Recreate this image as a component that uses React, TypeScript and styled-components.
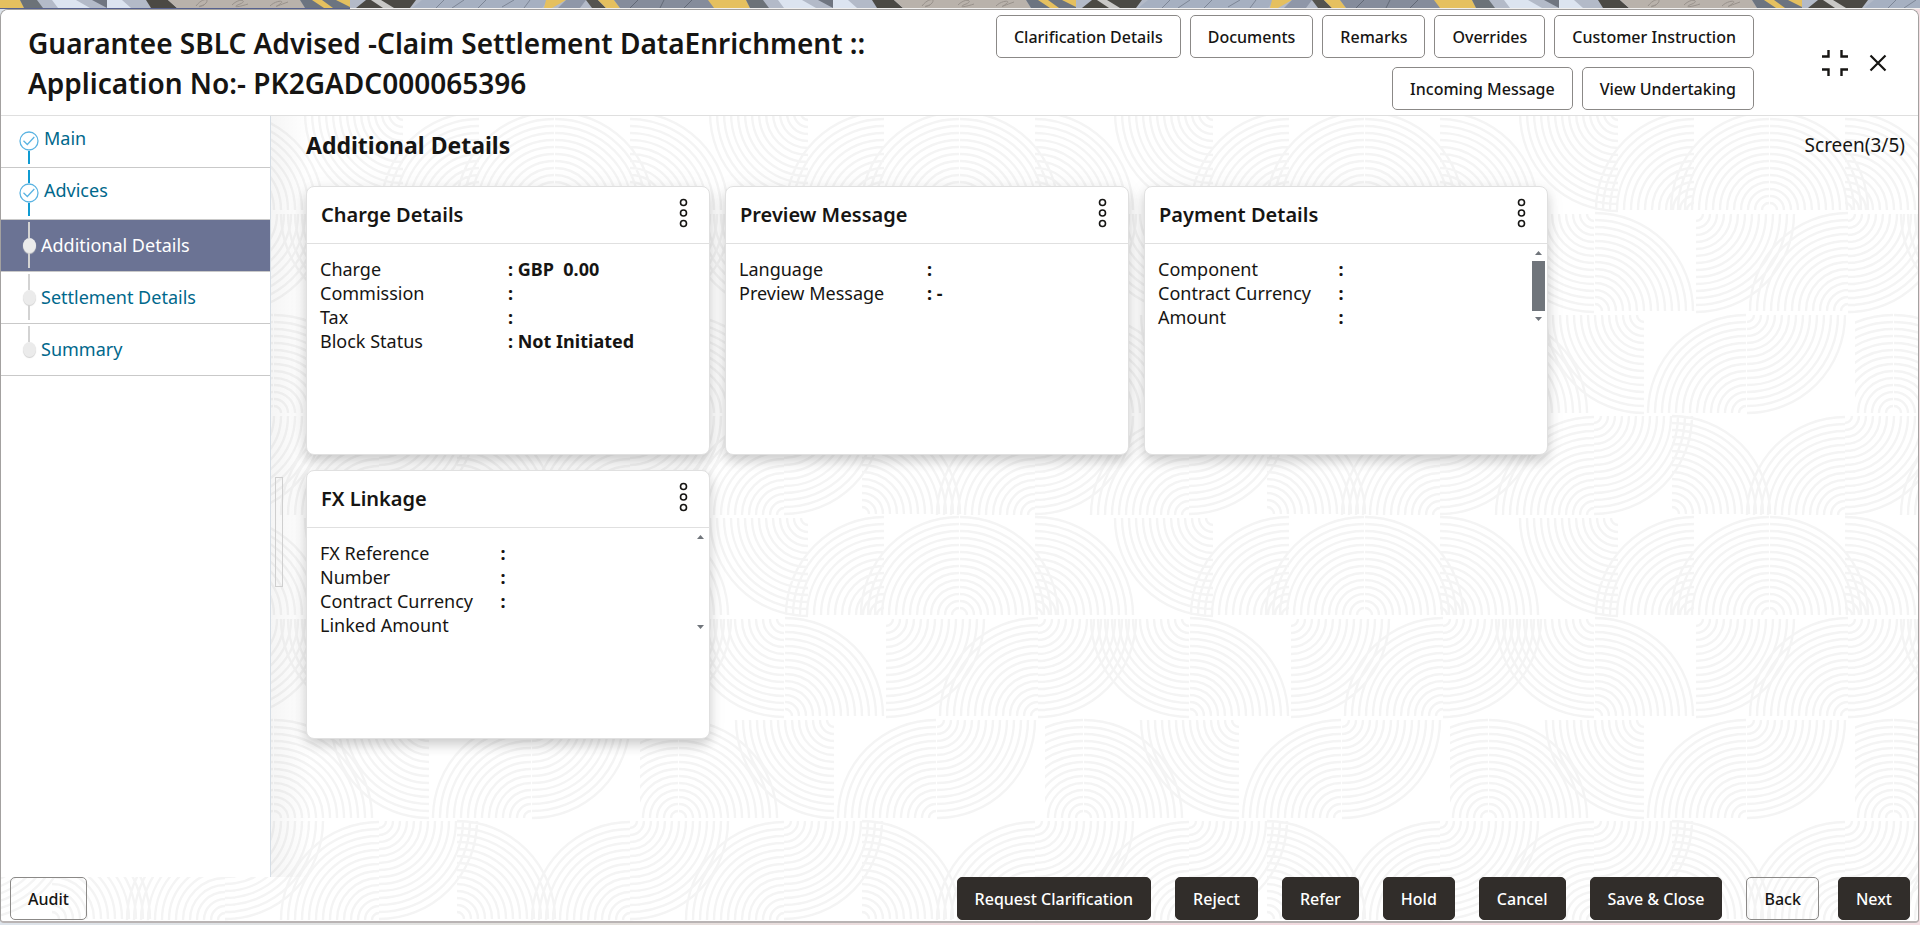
import React from "react";
import styled, { createGlobalStyle, css } from "styled-components";

/* ---------- background texture ---------- */

type Quadrant = "UL" | "UR" | "DL" | "DR";
type Fan = [cx: number, cy: number, quadrant: Quadrant];

const TILE = 405;

const FANS: Fan[] = [
  [144, 105, "UL"], [144, 6, "DR"], [222, 104, "UR"], [395, 105, "UL"], [395, 6, "DR"],
  [395, 205, "UR"], [168, 108, "DL"], [244, 205, "UL"], [319, 205, "UL"], [320, 205, "UR"],
  [398, 209, "DR"], [144, 209, "DL"], [145, 306, "UR"], [246, 209, "DR"], [398, 306, "UL"],
  [38, 408, "UL"], [39, 408, "UR"], [194, 310, "DL"], [296, 408, "UL"], [297, 310, "DR"],
];

const fanPath = ([cx, cy, q]: Fan) => {
  const sx = q === "UL" || q === "DL" ? -1 : 1;
  const sy = q === "UL" || q === "UR" ? -1 : 1;
  const sweep = sx * sy > 0 ? 1 : 0;
  let d = "";
  for (let r = 7; r <= 98; r += 7) {
    d += `M${cx + sx * r} ${cy}A${r} ${r} 0 0 ${sweep} ${cx} ${cy + sy * r}`;
  }
  return d;
};

const texture = () => {
  const d = FANS.map(fanPath).join("");
  const copies = [-TILE, 0]
    .flatMap((x) => [-TILE, 0].map((y) => `<use href='#f' x='${x}' y='${y}'/>`))
    .join("");
  const svg =
    `<svg xmlns='http://www.w3.org/2000/svg' width='${TILE}' height='${TILE}'>` +
    `<defs><path id='f' d='${d}' fill='none' stroke='#f4f4f4' stroke-width='2.4'/></defs>${copies}</svg>`;
  return `url("data:image/svg+xml,${encodeURIComponent(svg)}")`;
};

const TEXTURE = texture();

/* ---------- styles ---------- */

const GlobalStyle = createGlobalStyle`
  *, *::before, *::after { box-sizing: border-box; }
  body {
    margin: 0;
    background: #fff;
    color: #161513;
    font-family: "Noto Sans", "Open Sans", sans-serif;
    font-size: 18px;
    line-height: 24px;
  }
  button { font-family: inherit; cursor: pointer; }
`;

const Page = styled.div`
  display: flex;
  flex-direction: column;
  min-height: 100vh;
  background: linear-gradient(90deg, #dde3ea 0%, #e3e1dc 30%, #f1d9de 55%, #f3dfe3 100%);
`;

const Banner = styled.svg`
  display: block;
  width: 100%;
  height: 9px;
  flex: none;
`;

const Frame = styled.div`
  display: flex;
  flex-direction: column;
  flex: 1;
  margin: 0 1px 2px 0;
  border: 1px solid #a3a1a0;
  border-bottom: 2px solid #b9b4b4;
  border-radius: 8px 8px 4px 4px;
  background: #fff ${TEXTURE} 234px -5px;
  overflow: hidden;
`;

const Header = styled.header`
  display: flex;
  align-items: center;
  min-height: 106px;
  padding: 0 31px 0 27px;
  background: #fff;
  border-bottom: 1px solid #dfdfdf;
`;

const Title = styled.h1`
  flex: 1;
  margin: 0;
  max-width: 880px;
  font-size: 28px;
  line-height: 40px;
  font-weight: 600;
`;

const HeaderActions = styled.div`
  display: flex;
  flex: 0 1 780px;
  flex-wrap: wrap;
  justify-content: flex-end;
  gap: 9px;
  margin-left: auto;
`;

const WindowControls = styled.div`
  display: flex;
  align-items: center;
  gap: 20px;
  margin-left: 67px;
`;

const IconButton = styled.button`
  display: flex;
  padding: 0;
  border: 0;
  background: none;
  color: #161513;
`;

const Button = styled.button<{ $solid?: boolean }>`
  height: 43px;
  padding: 0 17px;
  border: 1px solid #8b8987;
  border-radius: 5px;
  background: transparent;
  color: #161513;
  font-size: 16px;
  line-height: 20px;
  font-weight: 500;
  white-space: nowrap;
  ${(p) =>
    p.$solid &&
    css`
      border-color: #312d2a;
      background: #312d2a;
      color: #fff;
    `}
`;

const Body = styled.div`
  display: flex;
  flex: 1;
`;

const Sidebar = styled.nav`
  flex: 0 0 270px;
  background: #fff;
  border-right: 1px solid #d5dde5;
`;

const StepList = styled.ol`
  margin: 0;
  padding: 0;
  list-style: none;
`;

const Step = styled.li<{ $active?: boolean }>`
  display: flex;
  height: 52px;
  padding-left: 18px;
  border-bottom: 1px solid #c9c9c9;
  background: ${(p) => (p.$active ? "#6b7394" : "#fff")};
`;

const Marker = styled.span`
  display: flex;
  flex-direction: column;
  align-items: center;
  width: 20px;
  padding: 2px 0 3px;
`;

const Rail = styled.span<{ $tone: "blue" | "grey" | "none" }>`
  flex: 1;
  width: 2px;
  background: ${(p) => ({ blue: "#0f9bd2", grey: "#d3d3d3", none: "transparent" })[p.$tone]};
`;

const Dot = styled.span`
  width: 13px;
  height: 15px;
  border-radius: 50%;
  background: #ebebeb;
  box-shadow: 0 1px 1px #d0d0d0;
`;

const StepLink = styled.a<{ $visited?: boolean; $active?: boolean }>`
  align-self: center;
  padding: ${(p) => (p.$visited ? "0 0 8px 5px" : "0 0 2px 2px")};
  color: ${(p) => (p.$active ? "#fff" : "#00688c")};
  text-decoration: none;
`;

const Splitter = styled.div`
  align-self: center;
  flex: none;
  width: 8px;
  height: 110px;
  margin-left: 4px;
  margin-top: 70px;
  border: 1px solid #cfcfcf;
`;

const Content = styled.main`
  display: flex;
  flex: 1;
  background: linear-gradient(90deg, rgba(0, 0, 0, 0.04), transparent 40px);
`;

const Panel = styled.div`
  flex: 1;
  padding: 13px 13px 0 23px;
`;

const PanelHead = styled.div`
  display: flex;
  align-items: center;
  justify-content: space-between;
  height: 32px;
`;

const PanelTitle = styled.h2`
  margin: 0;
  font-size: 23px;
  line-height: 32px;
  font-weight: 700;
`;

const ScreenCount = styled.span`
  font-size: 19px;
`;

const Cards = styled.div`
  display: grid;
  grid-template-columns: repeat(auto-fill, 404px);
  gap: 15px;
  max-width: 1600px;
  padding: 25px 60px 0 0;
`;

const Card = styled.section`
  height: 269px;
  border: 1px solid #e0e0e0;
  border-radius: 8px;
  background: #fff;
  box-shadow: 0 6px 12px rgba(0, 0, 0, 0.18), 0 0 24px rgba(0, 0, 0, 0.04);
`;

const CardHead = styled.div`
  display: flex;
  align-items: flex-start;
  justify-content: space-between;
  height: 57px;
  padding: 11px 21px 0 14px;
  border-bottom: 1px solid #e0e0e0;
`;

const CardTitle = styled.h3`
  margin: 0;
  font-size: 20px;
  line-height: 34px;
  font-weight: 600;
`;

const CardBody = styled.div`
  display: flex;
`;

const Fields = styled.dl`
  flex: 1;
  margin: 0;
  padding: 13px 13px 0;
`;

const Field = styled.div`
  display: grid;
  grid-template-columns: 1fr 1fr;
`;

const Label = styled.dt`
  white-space: nowrap;
`;

const Value = styled.dd`
  margin: 0;
  font-weight: 700;
  white-space: pre;
`;

const ScrollTrack = styled.div<{ $height: number }>`
  display: flex;
  flex-direction: column;
  justify-content: space-between;
  align-items: center;
  width: 13px;
  height: ${(p) => p.$height}px;
  margin: 6px 2px 0 0;
`;

const ScrollThumb = styled.div`
  flex: 0 0 50px;
  width: 13px;
  background: #70757b;
`;

const Footer = styled.footer`
  display: flex;
  justify-content: space-between;
  padding: 0 8px 1px 9px;
`;

const FooterGroup = styled.div`
  display: flex;
  gap: 24px;
`;

const StepNav = styled.div`
  display: flex;
  gap: 19px;
`;

/* ---------- drawings ---------- */

const BannerArt = () => (
  <Banner aria-hidden="true">
    <defs>
      <pattern id="banner" width="726" height="9" patternUnits="userSpaceOnUse">
        <rect width="726" height="8" fill="#b3bac8" />
        <path d="M0 0h20l4 8H0z" fill="#e5c05f" />
        <path d="M20 0h17l6 8H24z" fill="#6c7278" />
        <path d="M52 0h24l14 8H58z" fill="#dce4f0" />
        <path d="M92 0h15v8z" fill="#6f7580" />
        <path d="M107 0h15l9 8h-24z" fill="#dce4f0" />
        <path d="M146 0h22l9 8h-26z" fill="#4b4944" />
        <path d="M168 0h132l5 8H177z" fill="#b9b2ab" />
        <path
          d="M196 6c6-8 14-8 10-3s-12 4-2 2M232 5c8-8 16-4 8-1s-4 4 8 0M270 6c6-6 16-6 10-2s-6 3 8-2"
          fill="none"
          stroke="#98918b"
        />
        <path d="M300 0h50v8h-45z" fill="#6c7480" />
        <path d="M312 0h10l11 8h-9zM336 0h14v7z" fill="#e5c05f" />
        <path d="M366 0h50l-6 8h-54z" fill="#4b4944" />
        <path d="M371 0h10l13 8h-11z" fill="#c9c8c6" />
        <path d="M422 0h126l-6 8H412z" fill="#a6b0c1" />
        <path d="M436 8l8-8M452 8l12-8M478 8l8-8M502 7l12-7M524 8l6-8" stroke="#7d8696" />
        <path d="M546 0h20l-14 8h-8z" fill="#e5c05f" />
        <path d="M566 0h20l-6 8h-22z" fill="#8f97a8" />
        <path d="M586 0h12l8 8h-14z" fill="#55544f" />
        <path d="M598 0h16l6 8h-14z" fill="#e5c05f" />
        <path d="M614 0h96l8 8h-98z" fill="#858c9b" />
        <path d="M630 8l8-8M660 8l4-8M684 8l8-8" stroke="#626976" />
        <path d="M708 0h18v8h-12z" fill="#e5c05f" />
      </pattern>
    </defs>
    <rect width="100%" height="8" fill="url(#banner)" />
    <rect y="8" width="100%" height="1" fill="#f2f1f0" />
    <rect y="8" width="350" height="1" fill="#56618f" />
  </Banner>
);

const CheckCircle = () => (
  <svg width="20" height="20" viewBox="0 0 20 20" fill="none" stroke="#5cb4e2" aria-hidden="true">
    <circle cx="10" cy="10" r="9" strokeWidth="1.3" />
    <path d="M4.500 9.800l3.800 3.700 7-7.500" strokeWidth="1.3" />
  </svg>
);

const CollapseIcon = () => (
  <svg width="28" height="28" viewBox="0 0 28 28" fill="none" stroke="currentColor" strokeWidth="2.4" aria-hidden="true">
    <path d="M1 7.5h6.5V1M20.5 1v6.5H27M1 20.5h6.5V27M20.5 27v-6.5H27" />
  </svg>
);

const CloseIcon = () => (
  <svg width="18" height="18" viewBox="0 0 18 18" stroke="currentColor" strokeWidth="2.2" aria-hidden="true">
    <path d="M1.5 1.5l15 15M16.5 1.5l-15 15" />
  </svg>
);

const MoreIcon = () => (
  <svg width="9" height="30" viewBox="0 0 9 30" fill="none" stroke="#161513" strokeWidth="1.6" aria-hidden="true">
    <circle cx="4.5" cy="4.5" r="3" />
    <circle cx="4.5" cy="15" r="3" />
    <circle cx="4.5" cy="25.5" r="3" />
  </svg>
);

const Arrow = ({ up }: { up?: boolean }) => (
  <svg width="7" height="5" viewBox="0 0 7 5" fill="#70757b" aria-hidden="true">
    <path d={up ? "M0 5h7L3.5 1z" : "M0 0h7L3.5 4z"} />
  </svg>
);

/* ---------- data ---------- */

interface StepData {
  label: string;
  state: "visited" | "active" | "pending";
}

const STEPS: StepData[] = [
  { label: "Main", state: "visited" },
  { label: "Advices", state: "visited" },
  { label: "Additional Details", state: "active" },
  { label: "Settlement Details", state: "pending" },
  { label: "Summary", state: "pending" },
];

interface CardData {
  title: string;
  fields: [label: string, value: string][];
  scroll?: { height: number; thumb: boolean };
}

const CARDS: CardData[] = [
  {
    title: "Charge Details",
    fields: [
      ["Charge", ": GBP  0.00"],
      ["Commission", ":"],
      ["Tax", ":"],
      ["Block Status", ": Not Initiated"],
    ],
  },
  {
    title: "Preview Message",
    fields: [
      ["Language", ":"],
      ["Preview Message", ": -"],
    ],
  },
  {
    title: "Payment Details",
    fields: [
      ["Component", ":"],
      ["Contract Currency", ":"],
      ["Amount", ":"],
    ],
    scroll: { height: 72, thumb: true },
  },
  {
    title: "FX Linkage",
    fields: [
      ["FX Reference", ":"],
      ["Number", ":"],
      ["Contract Currency", ":"],
      ["Linked Amount", ""],
    ],
    scroll: { height: 96, thumb: false },
  },
];

const HEADER_BUTTONS = [
  "Clarification Details",
  "Documents",
  "Remarks",
  "Overrides",
  "Customer Instruction",
  "Incoming Message",
  "View Undertaking",
];

const FOOTER_BUTTONS = ["Request Clarification", "Reject", "Refer", "Hold", "Cancel", "Save & Close"];

/* ---------- components ---------- */

const StepItem = ({ step, first, last }: { step: StepData; first: boolean; last: boolean }) => {
  const visited = step.state === "visited";
  const active = step.state === "active";
  const tone = visited ? "blue" : "grey";
  return (
    <Step $active={active}>
      <Marker>
        <Rail $tone={first ? "none" : tone} />
        {visited ? <CheckCircle /> : <Dot />}
        <Rail $tone={last ? "none" : tone} />
      </Marker>
      <StepLink href="#" $visited={visited} $active={active} aria-current={active ? "step" : undefined}>
        {step.label}
      </StepLink>
    </Step>
  );
};

const DetailCard = ({ title, fields, scroll }: CardData) => (
  <Card>
    <CardHead>
      <CardTitle>{title}</CardTitle>
      <IconButton type="button" aria-label={`${title} options`}>
        <MoreIcon />
      </IconButton>
    </CardHead>
    <CardBody>
      <Fields>
        {fields.map(([label, value]) => (
          <Field key={label}>
            <Label>{label}</Label>
            <Value>{value}</Value>
          </Field>
        ))}
      </Fields>
      {scroll && (
        <ScrollTrack $height={scroll.height}>
          <Arrow up />
          {scroll.thumb && <ScrollThumb />}
          <Arrow />
        </ScrollTrack>
      )}
    </CardBody>
  </Card>
);

export default function App() {
  return (
    <>
      <GlobalStyle />
      <Page>
        <BannerArt />
        <Frame>
          <Header>
            <Title>Guarantee SBLC Advised -Claim Settlement DataEnrichment :: Application No:- PK2GADC000065396</Title>
            <HeaderActions>
              {HEADER_BUTTONS.map((label) => (
                <Button key={label} type="button">
                  {label}
                </Button>
              ))}
            </HeaderActions>
            <WindowControls>
              <IconButton type="button" aria-label="Collapse">
                <CollapseIcon />
              </IconButton>
              <IconButton type="button" aria-label="Close">
                <CloseIcon />
              </IconButton>
            </WindowControls>
          </Header>
          <Body>
            <Sidebar aria-label="Steps">
              <StepList>
                {STEPS.map((step, i) => (
                  <StepItem key={step.label} step={step} first={i === 0} last={i === STEPS.length - 1} />
                ))}
              </StepList>
            </Sidebar>
            <Content>
              <Splitter />
              <Panel>
                <PanelHead>
                  <PanelTitle>Additional Details</PanelTitle>
                  <ScreenCount>Screen(3/5)</ScreenCount>
                </PanelHead>
                <Cards>
                  {CARDS.map((card) => (
                    <DetailCard key={card.title} {...card} />
                  ))}
                </Cards>
              </Panel>
            </Content>
          </Body>
          <Footer>
            <Button type="button">Audit</Button>
            <FooterGroup>
              {FOOTER_BUTTONS.map((label) => (
                <Button key={label} type="button" $solid>
                  {label}
                </Button>
              ))}
              <StepNav>
                <Button type="button">Back</Button>
                <Button type="button" $solid>
                  Next
                </Button>
              </StepNav>
            </FooterGroup>
          </Footer>
        </Frame>
      </Page>
    </>
  );
}
